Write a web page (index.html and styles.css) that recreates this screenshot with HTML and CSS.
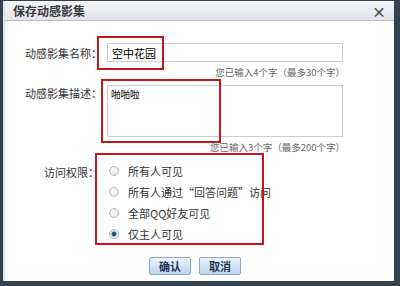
FILE: index.html
```html
<!DOCTYPE html>
<html lang="zh-CN">
<head>
    <meta charset="UTF-8">
    <title>保存动感影集</title>
    <link rel="stylesheet" href="styles.css">
</head>
<body>
    <div class="dialog">
        <div class="dialog-title">
            <span>保存动感影集</span>
            <span class="close-btn">×</span>
        </div>
        <div class="dialog-body">
            <div class="form-row">
                <label class="form-label">动感影集名称：</label>
                <div class="form-field">
                    <input type="text" class="text-input" value="空中花园">
                    <div class="hint">您已输入4个字（最多30个字）</div>
                </div>
            </div>
            <div class="form-row">
                <label class="form-label">动感影集描述：</label>
                <div class="form-field">
                    <textarea class="text-area">啪啪啦</textarea>
                    <div class="hint">您已输入3个字（最多200个字）</div>
                </div>
            </div>
            <div class="form-row access-row">
                <label class="form-label">访问权限：</label>
                <div class="radio-list">
                    <label class="radio-item"><input type="radio" name="access"> 所有人可见</label>
                    <label class="radio-item"><input type="radio" name="access"> 所有人通过“回答问题”访问</label>
                    <label class="radio-item"><input type="radio" name="access"> 全部QQ好友可见</label>
                    <label class="radio-item"><input type="radio" name="access" checked> 仅主人可见</label>
                </div>
            </div>
            <div class="btn-row">
                <button class="btn">确认</button>
                <button class="btn">取消</button>
            </div>

            <!-- red annotation boxes -->
            <div class="mark mark-name"></div>
            <div class="mark mark-desc"></div>
            <div class="mark mark-access"></div>
        </div>
    </div>
</body>
</html>
```

FILE: styles.css
```css
body {
    margin: 0;
    background: #34414e;
    font-family: "Noto Sans CJK SC", "Noto Sans", sans-serif;
    font-size: 11px;
    color: #333;
    overflow: hidden;
}

.dialog {
    margin: 1px 6px 0 3px;
    height: 280px;
    background: #fff;
    border-left: 2px solid #dfe3e8;
}

.dialog-title {
    height: 19px;
    display: flex;
    justify-content: space-between;
    align-items: center;
    padding: 0 8px 0 8px;
    background: linear-gradient(#f3f4f6, #e1e4e8);
    border-bottom: 1px solid #b5bcc4;
    font-size: 12px;
    font-weight: bold;
    color: #3a3a3a;
}

.close-btn {
    font-size: 14px;
    font-weight: bold;
    color: #4a4a4a;
    line-height: 1;
}

.dialog-body {
    position: relative;
    padding-top: 22px;
}

.form-row {
    display: flex;
    align-items: flex-start;
}

.form-label {
    width: 97px;
    text-align: right;
    flex-shrink: 0;
    padding-top: 2px;
    color: #333;
}

.form-field {
    margin-left: 5px;
    width: 236px;
}

.text-input {
    box-sizing: border-box;
    width: 236px;
    height: 19px;
    border: 1px solid #c9cdd2;
    padding: 0 4px;
    font-family: inherit;
    font-size: 11px;
    color: #000;
    margin: 0;
}

.text-area {
    box-sizing: border-box;
    width: 236px;
    height: 52px;
    margin: 2px 0 0;
    border: 1px solid #c9cdd2;
    padding: 1px 3px;
    font-family: inherit;
    font-size: 9.5px;
    color: #000;
    resize: none;
    display: block;
}

.hint {
    text-align: right;
    font-size: 9.5px;
    color: #666;
    height: 21px;
    line-height: 20px;
    margin-right: -2px;
}

.access-row {
    margin-top: 4px;
}

.access-row .form-label {
    width: 94px;
    padding-top: 2px;
    margin-right: 4px;
}

.radio-list {
    display: flex;
    flex-direction: column;
    gap: 3px;
    margin-left: 6px;
}

.radio-item {
    display: flex;
    align-items: center;
    gap: 9px;
    height: 18px;
    line-height: 18px;
}

.radio-item input {
    appearance: none;
    margin: 0;
    width: 10px;
    height: 10px;
    border: 1px solid #b4b8bd;
    border-radius: 50%;
    background: radial-gradient(circle at 40% 40%, #ffffff, #dcdfe3);
}

.radio-item input:checked {
    background: radial-gradient(circle, #1f3f7a 0, #3b5f9e 2px, #e4e7ea 3px);
}

.btn-row {
    display: flex;
    gap: 8px;
    margin: 14px 0 0 144px;
}

.btn {
    width: 42px;
    height: 18px;
    padding: 0;
    border: 1px solid #8fa7bf;
    border-radius: 2px;
    background: linear-gradient(#eaf3fc, #bcd5ef);
    font-family: inherit;
    font-size: 11px;
    font-weight: bold;
    color: #1e3550;
}

.mark {
    position: absolute;
    border: 2px solid #c4161c;
}

.mark-name {
    left: 92px;
    top: 15px;
    width: 63px;
    height: 30px;
}

.mark-desc {
    left: 96px;
    top: 58px;
    width: 116px;
    height: 60px;
}

.mark-access {
    left: 90px;
    top: 132px;
    width: 165px;
    height: 88px;
}
```
